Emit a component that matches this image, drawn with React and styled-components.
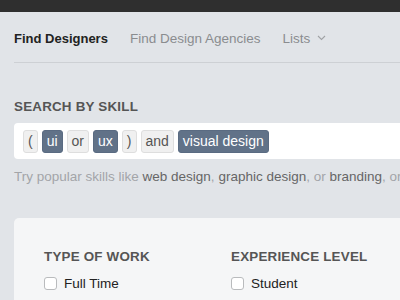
import React from "react";
import styled, { createGlobalStyle } from "styled-components";

const GlobalStyle = createGlobalStyle`
  html, body {
    margin: 0;
    padding: 0;
    background: #e1e4e8;
    font-family: "Liberation Sans", Arial, Helvetica, sans-serif;
    -webkit-font-smoothing: antialiased;
  }
`;

const Page = styled.div`
  width: 400px;
  height: 300px;
  overflow: hidden;
  background: #e1e4e8;
`;

const TopBar = styled.div`
  height: 12px;
  background: #2f2f2f;
`;

const Content = styled.div`
  padding: 0 0 0 14px;
`;

const Nav = styled.nav`
  display: flex;
  align-items: center;
  gap: 22px;
  height: 50px;
  border-bottom: 1px solid #cdd0d4;
`;

const NavItem = styled.a`
  display: flex;
  align-items: center;
  gap: 7px;
  font-size: ${(p) => (p.$active ? "13px" : "13.5px")};
  font-weight: ${(p) => (p.$active ? 700 : 400)};
  color: ${(p) => (p.$active ? "#222" : "#8a8c8f")};
  text-decoration: none;
  white-space: nowrap;
  padding-top: 2px;
`;

const Section = styled.section`
  padding-top: 36px;
`;

const Label = styled.h3`
  margin: 0;
  font-size: 13.4px;
  font-weight: 700;
  letter-spacing: 0.2px;
  color: #555;
  text-transform: uppercase;
  white-space: nowrap;
`;

const SearchBox = styled.div`
  margin-top: 9px;
  display: flex;
  align-items: center;
  gap: 4px;
  height: 36px;
  padding: 0 9px;
  background: #fff;
  border-radius: 4px 0 0 4px;
`;

const Chip = styled.span`
  display: inline-flex;
  align-items: center;
  justify-content: center;
  height: 21px;
  padding: 0 ${(p) => (p.$narrow ? 4 : 4)}px;
  border-radius: 3px;
  font-size: 14px;
  white-space: nowrap;
  background: ${(p) => (p.$tag ? "#617288" : "#f0f0f0")};
  color: ${(p) => (p.$tag ? "#fff" : "#555")};
  border: 1px solid ${(p) => (p.$tag ? "#5a6b82" : "#dedede")};
`;

const Hint = styled.p`
  margin: 10px 0 0;
  font-size: 13.5px;
  color: #a3a5a8;
  white-space: nowrap;

  b {
    font-weight: 400;
    color: #666;
  }
`;

const Panel = styled.div`
  margin-top: 34px;
  background: #f5f6f7;
  border-radius: 5px 0 0 0;
  padding: 31px 0 0 30px;
  display: grid;
  grid-template-columns: 187px 1fr;
  height: 120px;
`;

const Group = styled.div`
  display: flex;
  flex-direction: column;
  gap: 12px;
`;

const Option = styled.label`
  display: flex;
  align-items: center;
  gap: 7px;
  font-size: 13.5px;
  color: #222;
`;

const Box = styled.span`
  width: 11px;
  height: 11px;
  border: 1px solid #b9bbbd;
  border-radius: 3px;
  background: #fff;
`;

const Chevron = () => (
  <svg width="9" height="6" viewBox="0 0 9 6" fill="none">
    <path d="M1 1l3.5 3.5L8 1" stroke="#a0a2a5" strokeWidth="1.1" />
  </svg>
);

export default function App() {
  return (
    <Page>
      <GlobalStyle />
      <TopBar />
      <Content>
        <Nav>
          <NavItem $active>Find Designers</NavItem>
          <NavItem>Find Design Agencies</NavItem>
          <NavItem>
            Lists <Chevron />
          </NavItem>
        </Nav>
        <Section>
          <Label>Search by skill</Label>
          <SearchBox>
            <Chip $narrow>(</Chip>
            <Chip $tag>ui</Chip>
            <Chip>or</Chip>
            <Chip $tag>ux</Chip>
            <Chip $narrow>)</Chip>
            <Chip>and</Chip>
            <Chip $tag>visual design</Chip>
          </SearchBox>
          <Hint>
            Try popular skills like <b>web design</b>, <b>graphic design</b>, or{" "}
            <b>branding</b>, or
          </Hint>
        </Section>
        <Panel>
          <Group>
            <Label>Type of work</Label>
            <Option>
              <Box />
              Full Time
            </Option>
          </Group>
          <Group>
            <Label>Experience level</Label>
            <Option>
              <Box />
              Student
            </Option>
          </Group>
        </Panel>
      </Content>
    </Page>
  );
}
